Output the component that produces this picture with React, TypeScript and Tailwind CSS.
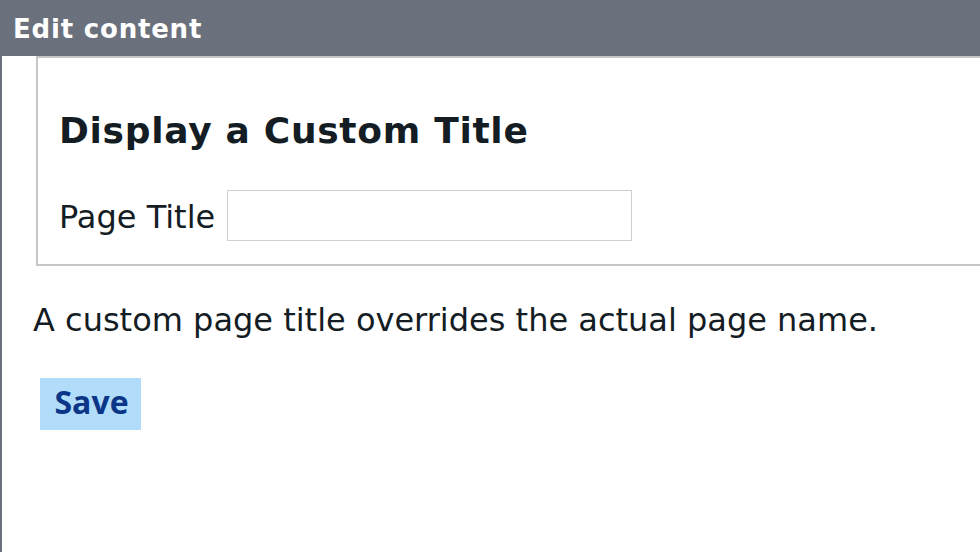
export default function App() {
  return (
    <div className="h-[552px] w-[980px] overflow-hidden bg-white font-['DejaVu_Sans',sans-serif] text-[#141c24]">
      <div className="flex h-14 items-center bg-[#6b717c] px-[13px] pt-[2px]">
        <h1 className="text-[26px] font-bold leading-none tracking-[0.8px] text-white">Edit content</h1>
      </div>
      <div className="h-[496px] border-l-2 border-[#6b717c] pl-[31px]">
        <div className="ml-[3px] w-[1000px] border-2 border-[#c6c6c6] px-[21px] pt-[55px] pb-[23px]">
          <h2 className="text-[36px] font-bold leading-none tracking-[0.7px]">Display a Custom Title</h2>
          <div className="mt-[41px] flex items-start gap-[12px]">
            <label className="mt-[11px] text-[32px] leading-none">Page Title</label>
            <input
              type="text"
              className="h-[51px] w-[405px] border border-[#cfcfcf] bg-white px-2 text-[28px] outline-none"
            />
          </div>
        </div>
        <p className="mt-[38px] text-[32px] leading-none">
          A custom page title overrides the actual page name.
        </p>
        <button
          type="button"
          className="mt-[42px] ml-[7px] h-[52px] w-[101px] bg-[#b2ddfa] pb-[4px] pl-[2px] font-['Open_Sans',sans-serif] text-[32px] font-bold leading-none text-[#0b3587]"
        >
          Save
        </button>
      </div>
    </div>
  );
}
